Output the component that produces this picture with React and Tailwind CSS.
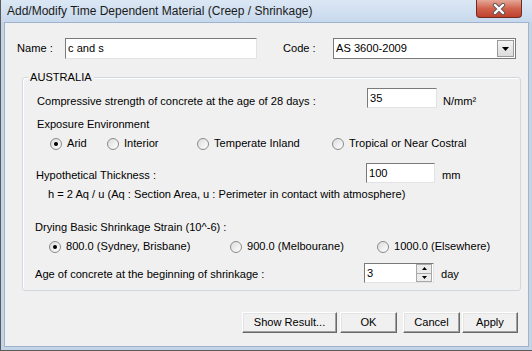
import React from "react";

function Radio({ checked, label, className = "" }) {
  return (
    <div className={"flex items-center " + className}>
      <div className="w-[12px] h-[12px] rounded-full border border-[#8a8a8a] bg-gradient-to-br from-[#dcdcdc] to-[#ffffff] flex items-center justify-center shrink-0">
        {checked ? <div className="w-[4px] h-[4px] rounded-full bg-black" /> : null}
      </div>
      <span className="ml-[5px] leading-[13px] whitespace-nowrap">{label}</span>
    </div>
  );
}

function TextBox({ value, className = "" }) {
  return (
    <div
      className={
        "h-[20px] bg-white border border-t-[#7a7a7a] border-l-[#7a7a7a] border-r-[#e3e3e3] border-b-[#e3e3e3] pl-[2px] flex items-center leading-[13px] " +
        className
      }
    >
      {value}
    </div>
  );
}

function Button({ children, className = "" }) {
  return (
    <div
      className={
        "h-[21px] flex items-center justify-center bg-[#f0f0f0] border border-t-[#ffffff] border-l-[#ffffff] border-r-[#696969] border-b-[#696969] shadow-[inset_-1px_-1px_0_#a0a0a0,inset_1px_1px_0_#e3e3e3] leading-[13px] " +
        className
      }
    >
      {children}
    </div>
  );
}

export default function App() {
  return (
    <div className="w-[532px] h-[351px] overflow-hidden bg-[#c3d4e7] border-l border-b border-[#5b5b5b] flex flex-col text-[11.1px] text-black font-['Liberation_Sans',Arial,sans-serif]">
      {/* Title bar */}
      <div className="h-[22px] shrink-0 bg-gradient-to-b from-[#dbe7f4] to-[#c8d9ed] flex items-start">
        <div className="pl-[6px] pt-[4px] text-[12px] leading-[15px] text-[#1a1a1a] whitespace-nowrap">
          Add/Modify Time Dependent Material (Creep / Shrinkage)
        </div>
        <div className="ml-auto mr-[10px] w-[46px] h-[18px] rounded-b-[4px] border border-t-0 border-[#6e2b22] bg-gradient-to-b from-[#e4a898] via-[#d0634e] to-[#c0402a] flex items-center justify-center">
          <svg width="16" height="12" viewBox="0 0 16 12">
            <path d="M4 2 L12 10 M12 2 L4 10" stroke="#5a5a5a" strokeWidth="4.2" strokeLinecap="round" />
            <path d="M4 2 L12 10 M12 2 L4 10" stroke="#ffffff" strokeWidth="2.4" strokeLinecap="round" />
          </svg>
        </div>
      </div>

      {/* Frame + client */}
      <div className="flex-1 px-[3px] pb-[3px] flex flex-col">
        <div className="flex-1 bg-[#f0f0f0] border border-[#9db3ce] flex flex-col">
          {/* Row 1: Name / Code */}
          <div className="mt-[15px] h-[21px] flex items-center">
            <div className="pl-[12px] w-[60px] leading-[13px]">Name :</div>
            <TextBox value="c and s" className="w-[192px] h-[21px]" />
            <div className="ml-[26px] w-[50px] leading-[13px]">Code :</div>
            <div className="w-[183px] h-[21px] bg-white border border-[#7a7a7a] flex items-center">
              <div className="flex-1 pl-[2px] leading-[13px]">AS 3600-2009</div>
              <div className="w-[17px] h-[17px] mr-[1px] bg-gradient-to-b from-[#f4f4f4] to-[#dcdcdc] border border-[#9a9a9a] flex items-center justify-center">
                <svg width="7" height="4" viewBox="0 0 7 4">
                  <path d="M0 0 H7 L3.5 4 Z" fill="#000" />
                </svg>
              </div>
            </div>
          </div>

          {/* Group box */}
          <div className="relative mt-[18px] ml-[17px] w-[499px] border border-[#d0d7de] rounded-[3px] shadow-[inset_1px_1px_0_#ffffff] flex flex-col pb-[7px]">
            <div className="absolute left-[5px] top-[-7px] px-[2px] bg-[#f0f0f0] leading-[13px]">AUSTRALIA</div>

            {/* Row A */}
            <div className="mt-[10px] h-[20px] flex items-start">
              <div className="pl-[14px] w-[344px] mt-[7px] leading-[13px] whitespace-nowrap">
                Compressive strength of concrete at the age of 28 days :
              </div>
              <TextBox value="35" className="w-[70px]" />
              <div className="ml-[6px] mt-[7px] leading-[13px]">N/mm²</div>
            </div>

            {/* Row B */}
            <div className="mt-[10px] pl-[14px] leading-[13px]">Exposure Environment</div>

            {/* Row C */}
            <div className="mt-[6px] h-[13px] flex items-center pl-[27px]">
              <Radio checked label="Arid" className="w-[57px]" />
              <Radio label="Interior" className="w-[90px]" />
              <Radio label="Temperate Inland" className="w-[135px]" />
              <Radio label="Tropical or Near Costral" />
            </div>

            {/* Row D */}
            <div className="mt-[13px] h-[20px] flex items-start">
              <div className="pl-[13px] w-[343px] mt-[6px] leading-[13px]">Hypothetical Thickness :</div>
              <TextBox value="100" className="w-[69px]" />
              <div className="ml-[7px] mt-[6px] leading-[13px]">mm</div>
            </div>

            {/* Row E */}
            <div className="mt-[5px] pl-[25px] leading-[13px] whitespace-nowrap">
              h = 2 Aq / u (Aq : Section Area, u : Perimeter in contact with atmosphere)
            </div>

            {/* Row F */}
            <div className="mt-[20px] pl-[12px] leading-[13px]">Drying Basic Shrinkage Strain (10^-6) :</div>

            {/* Row G */}
            <div className="mt-[6px] h-[13px] flex items-center pl-[26px]">
              <Radio checked label="800.0 (Sydney, Brisbane)" className="w-[181px]" />
              <Radio label="900.0 (Melbourane)" className="w-[147px]" />
              <Radio label="1000.0 (Elsewhere)" />
            </div>

            {/* Row H */}
            <div className="mt-[10px] h-[20px] flex items-start">
              <div className="pl-[12px] w-[341px] mt-[5px] leading-[13px] whitespace-nowrap">
                Age of concrete at the beginning of shrinkage :
              </div>
              <div className="w-[70px] h-[20px] bg-white border border-t-[#7a7a7a] border-l-[#7a7a7a] border-r-[#e3e3e3] border-b-[#e3e3e3] flex items-center">
                <div className="flex-1 pl-[2px] leading-[13px]">3</div>
                <div className="w-[16px] h-[18px] mr-[1px] flex flex-col">
                  <div className="flex-1 bg-[#ececec] border border-[#a8a8a8] flex items-center justify-center">
                    <svg width="5" height="3" viewBox="0 0 5 3">
                      <path d="M0 3 H5 L2.5 0 Z" fill="#000" />
                    </svg>
                  </div>
                  <div className="flex-1 bg-[#ececec] border border-t-0 border-[#a8a8a8] flex items-center justify-center">
                    <svg width="5" height="3" viewBox="0 0 5 3">
                      <path d="M0 0 H5 L2.5 3 Z" fill="#000" />
                    </svg>
                  </div>
                </div>
              </div>
              <div className="ml-[7px] mt-[5px] leading-[13px]">day</div>
            </div>
          </div>

          {/* Buttons */}
          <div className="mt-[21px] flex justify-end pr-[10px]">
            <Button className="w-[95px] border-[#3c3c3c] border-t-[#3c3c3c] border-l-[#3c3c3c]">Show Result...</Button>
            <Button className="w-[57px] ml-[3px]">OK</Button>
            <Button className="w-[57px] ml-[6px]">Cancel</Button>
            <Button className="w-[56px] ml-[2px]">Apply</Button>
          </div>
        </div>
      </div>
    </div>
  );
}
